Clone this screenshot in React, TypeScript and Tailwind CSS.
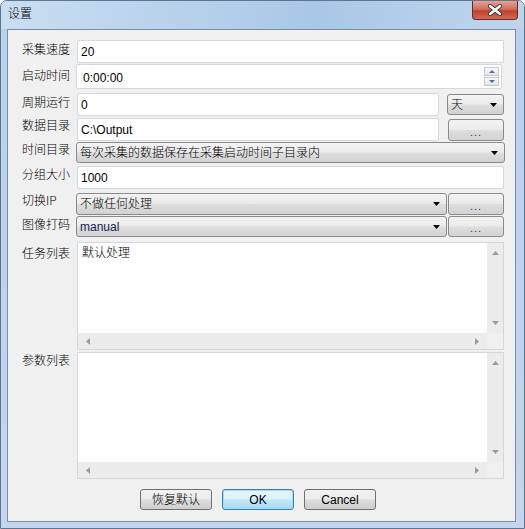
import React from 'react';

const Arrow = ({ dir, color = '#000', w = 7, h = 4 }: { dir: 'up' | 'down' | 'left' | 'right'; color?: string; w?: number; h?: number }) => {
  const pts =
    dir === 'down'
      ? `0,0 ${w},0 ${w / 2},${h}`
      : dir === 'up'
      ? `0,${h} ${w},${h} ${w / 2},0`
      : dir === 'left'
      ? `${h},0 ${h},${w} 0,${w / 2}`
      : `0,0 0,${w} ${h},${w / 2}`;
  const vw = dir === 'left' || dir === 'right' ? h : w;
  const vh = dir === 'left' || dir === 'right' ? w : h;
  return (
    <svg width={vw} height={vh} viewBox={`0 0 ${vw} ${vh}`}>
      <polygon points={pts} fill={color} />
    </svg>
  );
};

const Edit = ({ text, className = '' }: { text: string; className?: string }) => (
  <div className={`h-full bg-white border border-[#d3d8de] rounded-[2px] flex items-center pl-[3px] text-[12px] text-black ${className}`}>
    {text}
  </div>
);

const Combo = ({ text, className = '', textClass = '' }: { text: string; className?: string; textClass?: string }) => (
  <div
    className={`h-full border border-[#8a8a8a] rounded-[3px] bg-[linear-gradient(#f3f3f3_0%,#ebebeb_48%,#dedede_52%,#d2d2d2_100%)] flex items-center justify-between pl-[3px] pr-[6px] text-[12px] ${className}`}
  >
    <span className={textClass}>{text}</span>
    <Arrow dir="down" />
  </div>
);

const DotsButton = () => (
  <div className="w-[56px] h-full border border-[#8a8a8a] rounded-[3px] bg-[linear-gradient(#f3f3f3_0%,#ebebeb_48%,#dedede_52%,#d2d2d2_100%)] flex items-end justify-center pb-[1px] text-[11px] leading-[14px] text-[#2a2a8a] tracking-[1px]">
    ...
  </div>
);

const ListBox = ({ text, h }: { text?: string; h: string }) => (
  <div className={`${h} flex-1 bg-white border border-[#d3d8de] flex flex-col`}>
    <div className="flex-1 flex min-h-0">
      <div className="flex-1 pl-[4px] pt-[3px] text-[12px] leading-[14px] font-light">{text}</div>
      <div className="w-[16px] bg-[#ececec] flex flex-col items-center justify-between py-[8px]">
        <Arrow dir="up" color="#9a9a9a" />
        <Arrow dir="down" color="#9a9a9a" />
      </div>
    </div>
    <div className="h-[16px] flex">
      <div className="flex-1 bg-[#ececec] flex items-center justify-between px-[8px]">
        <Arrow dir="left" color="#9a9a9a" />
        <Arrow dir="right" color="#9a9a9a" />
      </div>
      <div className="w-[16px] bg-[#f0f0f0]" />
    </div>
  </div>
);

const Label = ({ text, pt = 'pt-[1px]' }: { text: string; pt?: string }) => (
  <div className={`w-[55px] shrink-0 text-[12px] leading-[14px] text-black font-light font-['Noto_Sans_CJK_SC',sans-serif] ${pt}`}>{text}</div>
);

const Button = ({ text, primary = false }: { text: string; primary?: boolean }) => (
  <div
    className={`w-[72px] h-[21px] rounded-[3px] border flex items-center justify-center text-[12px] text-black font-light ${
      primary
        ? 'border-[#3c7fb1] bg-[linear-gradient(#eaf6fd_0%,#d9f0fc_48%,#bee6fd_52%,#a7d9f5_100%)] shadow-[inset_0_0_0_1px_#9fdcfb]'
        : 'border-[#707070] bg-[linear-gradient(#f2f2f2_0%,#ebebeb_48%,#dddddd_52%,#cfcfcf_100%)]'
    }`}
  >
    {text}
  </div>
);

export default function App() {
  return (
    <div className="w-[525px] h-[529px] font-['Liberation_Sans','Noto_Sans_CJK_SC',sans-serif] bg-white">
      <div className="w-full h-full rounded-t-[7px] border border-[#5e7590] bg-[linear-gradient(180deg,#c9dcf0_0px,#b9d1ea_28px,#c2d7ee_100%)] flex flex-col">
        {/* Title bar */}
        <div className="h-[28px] shrink-0 flex items-start justify-between bg-[linear-gradient(90deg,#cadef2_0%,#b4cfea_40%,#a9c7e7_60%,#bfd5ee_100%)] rounded-t-[6px]">
          <div className="pl-[7px] pt-[6px] text-[12px] leading-[14px] text-black font-light">设置</div>
          <div className="mr-[6px] w-[46px] h-[19px] rounded-b-[4px] border border-t-0 border-[#6b2a22] bg-[linear-gradient(#e6a293_0%,#d0705e_45%,#c0402c_55%,#d36a4f_100%)] flex items-center justify-center">
            <svg width="16" height="12" viewBox="0 0 16 12">
              <path d="M3 2 L13 10 M13 2 L3 10" stroke="#3a3a3a" strokeWidth="4.2" strokeLinecap="round" />
              <path d="M3 2 L13 10 M13 2 L3 10" stroke="#ffffff" strokeWidth="2.4" strokeLinecap="round" />
            </svg>
          </div>
        </div>

        {/* Client area */}
        <div className="ml-[6px] mr-[8px] h-[493px] border border-[#7a8ca1] bg-[#f0f0f0] flex flex-col pt-[10px] pl-[14px] pr-[11px]">
          <div className="flex h-[23px]">
            <Label text="采集速度" pt="pt-[2px]" />
            <Edit text="20" className="flex-1" />
          </div>

          <div className="flex h-[25px] mt-[1px]">
            <Label text="启动时间" pt="pt-[4px]" />
            <div className="flex-1 -ml-[1px] mr-[2px] h-full bg-white border border-[#d3d8de] rounded-[2px] flex items-center justify-between pl-[6px] pr-[2px] text-[12px]">
              <span className="pt-[2px]">0:00:00</span>
              <div className="flex flex-col gap-[1px]">
                {['up', 'down'].map((d) => (
                  <div
                    key={d}
                    className="w-[15px] h-[9px] border border-[#c3c7cc] bg-[linear-gradient(#fafafa,#e4e4e4)] flex items-center justify-center"
                  >
                    <Arrow dir={d as 'up' | 'down'} color="#4a6cb3" w={6} h={3} />
                  </div>
                ))}
              </div>
            </div>
          </div>

          <div className="flex h-[23px] mt-[4px]">
            <Label text="周期运行" pt="pt-[2px]" />
            <Edit text="0" className="flex-1" />
            <div className="w-[57px] ml-[8px] h-[21px] mt-[1px] font-light">
              <Combo text="天" className="pl-[2px]" />
            </div>
          </div>

          <div className="flex h-[23px] mt-[2px]">
            <Label text="数据目录" pt="pt-[0px]" />
            <Edit text="C:\Output" className="flex-1" />
            <div className="ml-[9px] h-[22px] mt-[1px]">
              <DotsButton />
            </div>
          </div>

          <div className="flex h-[21px] mt-[1px]">
            <Label text="时间目录" pt="pt-[0px]" />
            <Combo text="每次采集的数据保存在采集启动时间子目录内" textClass="font-light" className="flex-1 -ml-[1px] -mr-[1px]" />
          </div>

          <div className="flex h-[23px] mt-[3px]">
            <Label text="分组大小" pt="pt-[1px]" />
            <Edit text="1000" className="flex-1" />
          </div>

          <div className="flex h-[22px] mt-[4px]">
            <Label text="切换IP" pt="pt-[0px]" />
            <Combo text="不做任何处理" textClass="font-light" className="flex-1 -ml-[1px]" />
            <div className="ml-[1px] h-[22px]">
              <DotsButton />
            </div>
          </div>

          <div className="flex h-[21px] mt-[1px]">
            <Label text="图像打码" pt="pt-[1px]" />
            <Combo text="manual" textClass="text-[#14235e]" className="flex-1 -ml-[1px]" />
            <div className="ml-[1px] h-[21px]">
              <DotsButton />
            </div>
          </div>

          <div className="flex mt-[5px]">
            <Label text="任务列表" pt="pt-[4px]" />
            <ListBox text="默认处理" h="h-[108px]" />
          </div>

          <div className="flex mt-[2px]">
            <Label text="参数列表" pt="pt-[1px]" />
            <ListBox h="h-[127px]" />
          </div>

          <div className="flex justify-center gap-[10px] mt-[10px] pr-[10px]">
            <Button text="恢复默认" />
            <Button text="OK" primary />
            <Button text="Cancel" />
          </div>
        </div>
      </div>
    </div>
  );
}
